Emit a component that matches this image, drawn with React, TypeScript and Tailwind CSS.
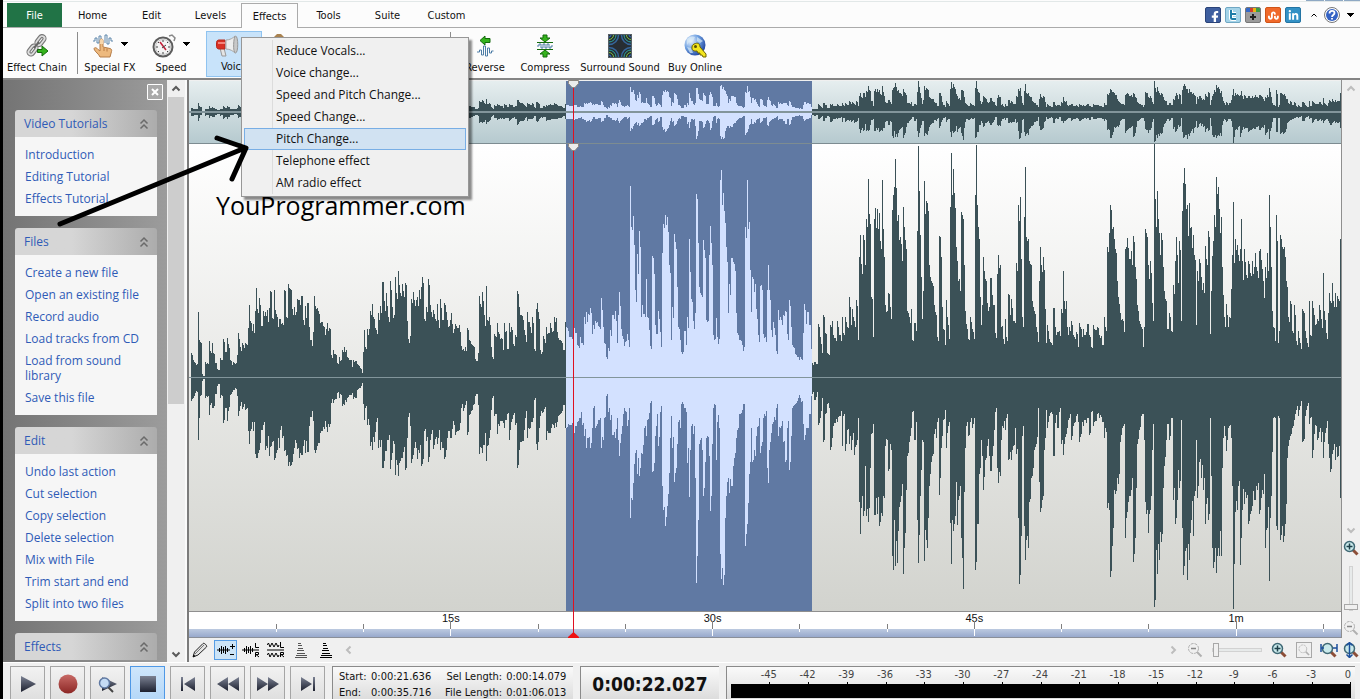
import type { ReactNode } from "react";
import { FaFacebookF, FaLinkedinIn, FaStumbleupon } from "react-icons/fa";

const DURATION = 66.013;
const SELECTION = { start: 21.636, end: 35.716 };
const CURSOR = 22.027;

const WAVE_WIDTH = 1152;

// "x up down" for each peak, in wave pixels
const PEAK_DATA = `
2 24 23,4 17 20,6 14 15,9 65 62,10 37 40,11 35 18,13 3 3,14 1 1,16 15 20,20 36 37,21 26 27,23 34 30,24 24 30,26 14 16,28 8 8,29 7 6,
31 19 20,34 38 45,36 25 30,38 39 43,39 33 33,41 17 17,43 12 14,44 15 12,48 22 18,49 44 38,51 30 28,53 34 31,56 34 32,59 49 53,60 72 66,
61 56 53,64 53 53,66 66 76,67 89 80,68 68 80,70 79 72,72 51 52,74 66 47,76 65 72,78 67 70,80 69 78,81 86 69,83 59 64,85 87 82,86 67 80,
88 60 72,91 58 52,93 54 60,95 87 73,97 60 78,99 93 88,101 88 88,103 68 84,105 70 70,108 78 71,110 77 80,112 81 77,114 57 68,116 71 75,
118 74 74,120 50 48,121 37 39,124 45 43,125 81 72,126 71 75,128 69 68,130 63 65,132 55 53,135 50 51,138 54 54,141 48 46,142 22 25,
144 27 25,148 14 15,150 20 20,153 27 28,155 30 27,158 20 20,161 17 17,163 10 15,164 17 21,168 13 12,171 9 10,173 4 5,174 25 26,
175 47 42,176 30 30,178 48 47,181 66 68,183 73 72,185 58 64,187 47 44,189 64 70,191 71 69,193 95 90,195 76 83,197 84 73,199 60 62,
201 96 91,203 70 75,206 100 97,208 78 87,209 106 98,211 84 83,213 93 80,216 94 92,218 56 60,219 38 39,221 41 48,222 78 85,224 85 77,
228 80 81,230 87 75,232 90 88,233 100 86,235 58 53,237 70 63,239 98 84,241 72 62,244 67 71,248 73 66,249 57 60,251 78 72,253 57 70,
255 74 81,258 57 60,262 64 60,263 53 51,266 53 57,270 52 52,272 31 30,274 28 33,276 30 27,278 49 57,280 37 37,284 31 27,286 18 18,
289 24 27,290 81 76,292 70 70,293 85 75,295 62 67,297 91 83,298 57 68,300 60 60,302 30 32,303 20 20,305 43 38,308 54 56,310 43 48,
314 27 45,315 54 50,318 28 36,320 54 62,322 50 44,324 33 37,326 42 47,328 86 90,330 70 72,332 62 64,334 57 63,336 42 40,338 65 60,
341 50 50,343 60 44,345 28 22,347 68 66,348 74 72,350 58 50,351 27 38,354 41 34,357 50 62,361 54 55,365 60 50,368 45 44,371 37 36,
374 27 27,376 55 50,377 50 50,380 40 47,384 57 65,386 44 48,388 32 44,391 40 40,393 34 47,395 60 58,397 65 70,399 63 60,401 69 70,
403 43 50,404 52 30,406 56 50,408 55 46,410 50 42,412 79 70,414 50 62,415 34 40,417 20 18,419 29 34,421 47 42,423 62 57,426 66 60,
428 34 40,429 62 62,430 85 78,432 48 56,434 38 36,438 43 48,440 30 30,441 191 140,442 150 120,443 147 122,444 161 105,446 87 75,
447 75 72,448 123 96,450 146 98,451 130 90,452 60 75,453 72 76,455 63 50,457 98 58,458 60 42,460 47 35,461 31 25,463 121 94,
465 103 85,466 52 58,468 43 36,469 66 68,471 45 34,472 30 28,473 124 108,474 153 132,476 162 148,478 160 128,480 112 95,481 104 60,
482 37 38,483 70 70,485 143 104,486 135 95,488 90 66,489 50 44,491 37 50,492 25 26,495 46 30,497 32 34,498 60 85,500 138 119,
501 105 72,502 78 48,504 56 56,506 64 100,507 183 205,508 178 178,509 134 142,510 90 66,513 80 72,514 137 118,516 119 84,517 57 60,
520 122 78,521 151 133,523 112 66,524 42 30,527 59 82,528 40 44,530 38 50,531 197 176,532 207 201,533 172 190,534 184 207,535 166 197,
536 154 140,537 130 118,539 64 100,540 93 115,542 119 108,544 115 88,545 113 80,547 64 60,548 44 52,550 37 36,553 32 32,555 30 26,
556 150 168,558 197 146,559 148 125,560 155 96,561 107 84,562 65 50,563 100 84,566 93 78,567 68 58,569 42 48,571 91 75,572 92 68,
574 43 40,576 40 38,578 87 90,579 112 105,580 87 72,582 47 55,584 55 44,586 42 42,587 26 30,589 67 58,591 60 50,594 62 64,596 66 84,
598 43 50,600 77 92,602 50 58,603 32 30,606 23 26,609 20 20,612 18 24,614 44 46,615 73 62,617 53 50,618 65 50,620 52 36,622 28 18,
623 14 16,625 15 22,628 13 14,629 53 47,631 40 40,633 24 20,634 62 64,636 44 36,638 24 26,640 22 30,641 52 72,643 56 60,644 42 48,
648 56 44,650 42 38,653 60 68,654 44 38,656 60 73,658 50 52,660 80 66,662 52 72,663 68 62,665 56 77,667 77 67,669 37 40,670 120 124,
671 142 156,672 113 130,674 142 138,676 112 88,677 158 138,679 198 144,680 163 130,681 153 90,682 80 56,684 40 46,685 158 137,
686 169 137,688 168 136,690 164 148,691 136 144,693 197 138,694 148 118,695 120 120,696 72 68,698 66 62,699 84 93,701 70 66,702 58 72,
703 167 178,704 182 192,705 190 142,706 218 188,708 156 185,709 162 153,711 140 124,713 116 106,714 170 196,715 150 170,717 128 112,
718 66 78,720 60 64,722 68 50,723 37 34,725 54 62,727 46 44,728 146 142,729 231 185,730 186 157,731 142 118,732 100 92,733 58 62,
734 86 64,735 196 183,737 176 162,738 174 170,739 166 140,740 112 108,742 96 84,743 94 78,745 72 56,747 62 60,748 40 44,750 141 117,
751 140 100,752 120 70,753 70 58,754 48 42,756 32 32,757 77 70,758 60 55,760 38 44,761 170 145,762 224 186,763 182 142,764 208 153,
765 184 146,766 169 138,767 130 104,768 116 147,770 98 118,771 86 108,772 165 160,773 162 180,774 158 211,775 112 114,776 66 70,
777 53 48,779 38 58,781 60 44,783 48 50,785 38 40,786 182 192,787 232 184,788 172 146,789 150 146,790 138 96,791 80 90,792 52 62,
793 72 78,794 120 112,796 98 82,798 74 68,800 70 78,801 99 93,803 82 78,805 72 52,806 44 34,808 103 90,809 122 105,811 112 98,
812 50 62,813 51 48,814 38 50,816 58 52,817 40 40,819 83 82,821 62 74,822 78 82,824 56 68,826 54 50,827 114 76,829 172 140,
830 156 206,831 180 197,832 118 158,833 60 58,835 160 148,836 210 182,837 140 162,839 138 170,840 116 124,842 112 100,843 76 98,
845 66 72,847 50 66,849 35 30,850 96 104,851 130 134,852 112 130,854 120 118,855 107 72,856 68 60,857 34 32,858 52 50,860 38 38,
863 32 36,864 69 78,866 50 45,868 45 50,870 46 34,872 68 66,874 106 77,875 76 66,877 76 56,878 50 50,880 50 40,882 56 62,884 42 48,
887 45 38,889 30 44,890 54 64,893 40 44,894 48 48,898 53 40,900 42 57,902 30 34,904 52 48,908 50 36,910 42 40,913 32 44,915 60 60,
917 46 54,918 130 130,920 144 132,921 172 199,923 148 168,924 150 150,925 138 112,926 128 116,928 96 100,929 80 106,931 64 64,
933 58 50,935 45 46,936 128 160,937 130 140,938 139 134,940 118 118,942 126 112,944 141 184,946 110 160,947 98 110,948 72 66,
950 56 52,952 50 38,954 30 36,955 50 62,956 148 124,957 144 136,959 112 155,961 116 132,963 74 72,964 56 46,965 233 229,966 178 222,
967 150 172,968 186 196,969 158 166,970 144 182,972 144 164,974 110 110,975 86 88,977 76 62,978 48 46,980 64 62,982 46 40,984 92 122,
986 116 146,987 140 140,989 94 92,990 136 110,992 56 42,993 166 150,994 194 197,995 209 188,997 168 170,998 172 202,1000 174 182,
1002 150 142,1004 142 158,1005 122 118,1007 52 62,1008 106 120,1010 118 84,1012 100 100,1014 94 112,1016 131 146,1017 118 126,
1019 146 142,1020 140 136,1021 43 40,1022 86 98,1023 121 170,1024 136 190,1025 162 184,1027 200 195,1029 190 170,1030 168 178,
1032 160 178,1033 110 90,1034 82 60,1035 60 48,1036 50 58,1037 73 73,1039 50 50,1040 60 48,1042 88 60,1043 122 108,1044 175 231,
1045 114 186,1046 138 134,1048 132 132,1049 122 108,1051 128 187,1052 158 160,1053 116 132,1055 128 126,1057 102 120,1059 116 146,
1061 104 136,1063 116 128,1066 124 122,1068 106 112,1070 126 136,1071 128 132,1073 108 112,1074 96 116,1076 110 170,1078 124 150,
1080 182 203,1081 150 140,1082 110 118,1083 66 74,1084 50 40,1086 36 40,1087 162 148,1088 136 152,1089 34 38,1090 46 40,1091 142 162,
1093 130 148,1094 128 164,1095 130 158,1097 96 126,1098 90 80,1099 60 68,1101 76 58,1103 46 50,1105 72 42,1107 36 32,1109 46 38,
1111 34 28,1113 68 64,1116 46 38,1118 34 28,1120 76 46,1121 42 40,1123 76 80,1125 62 56,1128 58 62,1130 72 54,1132 58 64,1134 104 80,
1135 66 64,1137 44 50,1139 64 66,1140 84 80,1141 76 94,1143 94 76,1144 76 72,1146 84 82,1149 78 78,1150 76 68,1151 138 120`;

type Column = { x: number; up: number; down: number };

// Fill in every column between two peaks, with a little variation so it does not look flat
const buildColumns = (): Column[] => {
  const peaks = PEAK_DATA.trim().split(",").map((p) => p.trim().split(" ").map(Number));
  const columns: Column[] = [];
  peaks.forEach(([x, up, down], i) => {
    const next = i + 1 < peaks.length ? peaks[i + 1][0] : x + 1;
    for (let c = x; c < next; c++) {
      const rnd = Math.abs(Math.sin(c * 12.9898) * 43758.5453) % 1;
      const k = c === x ? 1 : 0.82 + rnd * 0.18;
      columns.push({ x: c, up: up * k, down: down * k });
    }
  });
  return columns;
};

const COLUMNS = buildColumns();
const SEL_X1 = Math.floor((SELECTION.start / DURATION) * WAVE_WIDTH);
const SEL_X2 = Math.floor((SELECTION.end / DURATION) * WAVE_WIDTH);
const CURSOR_X = Math.floor((CURSOR / DURATION) * WAVE_WIDTH);

const wavePath = (columns: Column[], middle: number, scale: number) =>
  columns
    .map(({ x, up, down }) => `M${x} ${Math.round(middle - up * scale)}h1V${Math.round(middle + 1 + down * scale)}h-1z`)
    .join("");

const percent = (seconds: number) => `${(seconds / DURATION) * 100}%`;

function Waveform({ height, scale }: { height: number; scale: number }) {
  const middle = Math.floor(height / 2);
  const inside = COLUMNS.filter((c) => c.x >= SEL_X1 && c.x < SEL_X2);
  const outside = COLUMNS.filter((c) => c.x < SEL_X1 || c.x >= SEL_X2);

  return (
    <svg
      className="absolute inset-0 h-full w-full"
      viewBox={`0 0 ${WAVE_WIDTH} ${height}`}
      preserveAspectRatio="none"
      shapeRendering="crispEdges"
    >
      <rect x={SEL_X1} y={0} width={SEL_X2 - SEL_X1} height={height} fill="#6079a3" />
      <path d={wavePath(outside, middle, scale)} fill="#3b5157" />
      <path d={wavePath(inside, middle, scale)} fill="#d3e1ff" />
      <rect x={0} y={middle} width={WAVE_WIDTH} height={1} fill="#82959b" />
      <rect x={CURSOR_X} y={0} width={1} height={height} fill="#e01020" />
    </svg>
  );
}

/* ---------- small drawings ---------- */

const Caret = () => (
  <svg width="7" height="4" viewBox="0 0 7 4" shapeRendering="crispEdges"><path d="M0 0h7L3.5 4z" fill="#000" /></svg>
);

type Dir = "up" | "down" | "left" | "right";
const CHEVRONS: Record<Dir, string> = {
  up: "M1.5 6.5 5 3l3.5 3.5",
  down: "M1.5 3.5 5 7l3.5-3.5",
  left: "M6.5 1.5 3 5l3.5 3.5",
  right: "M3.5 1.5 7 5 3.5 8.5",
};

function Chevron({ dir, color = "#5a5a5a" }: { dir: Dir; color?: string }) {
  return (
    <svg width="10" height="10" viewBox="0 0 10 10">
      <path d={CHEVRONS[dir]} fill="none" stroke={color} strokeWidth="2" />
    </svg>
  );
}

const ChainIcon = () => (
  <svg width="24" height="24" viewBox="0 0 24 24" fill="none">
    <g stroke="#777" strokeWidth="4">
      <rect x="13" y="1.5" width="5" height="10" rx="2.5" transform="rotate(38 15.500 6.500)" />
      <rect x="5" y="11" width="5" height="10" rx="2.5" transform="rotate(38 7.500 16)" />
    </g>
    <g stroke="#dedede" strokeWidth="1.8">
      <rect x="13" y="1.5" width="5" height="10" rx="2.5" transform="rotate(38 15.500 6.500)" />
      <rect x="5" y="11" width="5" height="10" rx="2.5" transform="rotate(38 7.500 16)" />
    </g>
    <path d="m9 14 5-6" stroke="#666" strokeWidth="2" />
    <path d="M12.5 15.5H17V12l6 5-6 5v-3.500h-4.500z" fill="#35b31c" stroke="#146a0c" />
  </svg>
);

const FingerIcon = () => (
  <svg width="22" height="24" viewBox="0 0 22 24" fill="none">
    <path d="M1 7h2V4h2v5h2V2h2v8m4-1V1h2v9h2V4h2v3h2" stroke="#5d86ab" />
    <path d="M8 6.500c0-2 3-2 3 0V13l7 1.500c1.500.5 2 1.500 1.500 3L18 23H8c-1-3-5-5-6-8 0-1.500 2-2 3.500 0L8 17z" fill="#edb97e" stroke="#b57c48" />
    <path d="M8 6.500c0-2 3-2 3 0V10H8z" fill="#f7d6ab" />
    <path d="M12 14v3m3-2.500v3" stroke="#b87a42" />
  </svg>
);

const StopwatchIcon = () => (
  <svg width="24" height="24" viewBox="0 0 24 24" fill="none">
    <path d="m17 2 3-1 3 3-1 3" stroke="#888" strokeWidth="1.5" />
    <circle cx="11" cy="13" r="9.500" fill="#f4f4f4" stroke="#5c5c5c" strokeWidth="2" />
    <circle cx="11" cy="13" r="7.500" stroke="#c6c6c6" />
    <path d="M11 6v2m0 10v2m-7-7h2m10 0h2M6 8l1 1m8 8 1 1m0-10-1 1m-8 8-1 1" stroke="#444" />
    <path d="m8 8 6 8" stroke="#c4213a" strokeWidth="1.5" />
    <path d="m10 14 4-3" stroke="#444" />
  </svg>
);

const MegaphoneIcon = () => (
  <svg width="24" height="24" viewBox="0 0 24 24">
    <path d="m5 13 2 8h4l-2-8z" fill="#e4e4e4" stroke="#999" />
    <path d="M1.500 7.500C1.500 6 2.500 5 4 5h6v9H4c-1.500 0-2.500-1-2.500-2.500z" fill="#d93025" stroke="#b5281c" />
    <path d="M3 7h7v2H3z" fill="#f4837a" />
    <path d="M11 5c4 0 7-2 9-4v17c-2-2-5-4-9-4z" fill="#ededed" stroke="#a8a8a8" />
    <path d="M20.500 1c3 0 3 17 0 17s-2-17 0-17z" fill="#c8c8c8" stroke="#979797" />
  </svg>
);

const ReverseIcon = () => (
  <svg width="20" height="24" viewBox="0 0 20 24" fill="none">
    <path d="M5 6.500 10 2v2.500h5v4h-5V11z" fill="#35b31c" stroke="#146a0c" />
    <path d="M2 18h2.500v-2h2v5h2v-9h2v10h2v-8h2v5h2v-2h2" stroke="#4d7da6" />
  </svg>
);

const CompressIcon = () => (
  <svg width="18" height="24" viewBox="0 0 18 24" fill="none">
    <path d="M7 1h4v3h3L9 8 4 4h3zM7 23h4v-3h3l-5-4-5 4h3z" fill="#35b31c" stroke="#146a0c" />
    <path d="M1 8.500h16m-16 7h16" stroke="#146a0c" />
    <path d="M1 12h2v-2h2v4h2v-4h2v4h2v-4h2v4h2v-2h2" stroke="#4d7da6" />
  </svg>
);

const SurroundIcon = () => (
  <svg width="24" height="24" viewBox="0 0 24 24" fill="none">
    <rect width="24" height="24" fill="#272d33" />
    {[0, 90, 180, 270].map((angle) => (
      <g key={angle} transform={`rotate(${angle} 12 12)`}>
        <path d="M10.500 1A9.500 9.500 0 0 1 1 10.500" stroke="#35669c" strokeWidth="1.500" />
        <path d="M8 1a7 7 0 0 1-7 7" stroke="#2ca5a0" />
        <path d="M5.500 1A4.500 4.500 0 0 1 1 5.500" stroke="#7cc242" />
        <path d="M3 1a2 2 0 0 1-2 2" stroke="#2f73c9" />
      </g>
    ))}
    <rect x=".5" y=".5" width="23" height="23" stroke="#555f66" />
  </svg>
);

const GlobeKeyIcon = () => (
  <svg width="24" height="24" viewBox="0 0 24 24">
    <defs>
      <radialGradient id="globe" cx=".3" cy=".3" r=".8">
        <stop offset="0" stopColor="#eef6ff" />
        <stop offset=".5" stopColor="#6d9fe0" />
        <stop offset="1" stopColor="#1c3f9b" />
      </radialGradient>
    </defs>
    <circle cx="12" cy="11" r="10.500" fill="url(#globe)" />
    <path d="M4 5c3-3 6-3 8-2l-2 4-4 1-2 3zM14 3l6 4-3 2-3-2zM4 13l4 1 2 5-3 0z" fill="#d7e9f7" opacity=".7" />
    <path d="M12.500 9.500c2.500-1 4.500.5 4.500 3.500l6 7v3h-3l-1-2h-2v-2h-2l-1-2c-3.500.5-5.500-1-5-4 0-2 1.500-3 3.500-3.500z" fill="#f3e51d" stroke="#6d6300" />
    <circle cx="12.500" cy="12.500" r="1.500" fill="#5a5200" />
  </svg>
);

function Magnifier({ sign, off = false, arrows }: { sign?: "+" | "-"; off?: boolean; arrows?: "h" | "v" }) {
  const rim = off ? "#b0b0b0" : "#3f6874";
  return (
    <svg width="18" height="16" viewBox="0 0 18 16" fill="none">
      <path d="m10.500 9.500 5 5" stroke={off ? "#b0b0b0" : "#8c4e38"} strokeWidth={off ? "2" : "3"} />
      <circle cx="7.500" cy="6.500" r="5" fill={off ? "#f0f0f0" : "#c9e9eb"} stroke={rim} strokeWidth={off ? "1" : "1.5"} strokeDasharray={off ? "3 1" : undefined} />
      {sign && <path d={sign === "+" ? "M4.500 6.500h6m-3-3v6" : "M5 6.500h5"} stroke={off ? "#888" : "#1d3f49"} strokeWidth="1.500" />}
      {arrows === "h" && <path d="M1 2v8m16-8v8M1 6h3m13 0h-4" stroke="#1b4f9c" strokeWidth="1.500" />}
      {arrows === "v" && <path d="M7.500 0v16M4.500 3.500l3-3 3 3M4.500 12.500l3 3 3-3" stroke="#1b4f9c" strokeWidth="1.500" />}
    </svg>
  );
}

const PencilIcon = () => (
  <svg width="18" height="18" viewBox="0 0 18 18">
    <path d="m2 16 1.500-5L12 2.500c1-1 4.500 2 3.500 3.500L7 14z" fill="#e3e3e3" stroke="#222" />
    <path d="m4 13 9-9" stroke="#777" />
    <path d="m2 16 .5-2.500L4.500 15z" fill="#000" />
  </svg>
);

const WavePlusIcon = () => (
  <svg width="18" height="16" viewBox="0 0 18 16" fill="none" stroke="#000">
    <path d="M0 8h13M2.500 6v4m2-6v8m2-7v6m2-7v8m2-6v4M15.500 2v5M13 4.500h5M13 12.500h4" />
  </svg>
);
const WaveLRIcon = () => (
  <svg width="18" height="16" viewBox="0 0 18 16" fill="none" stroke="#000">
    <path d="M0 8h17M2.500 6v4m2-6v8m2-7v6m2-7v8m2-6v4M13.500 1v4.500H17M13.500 15v-4.500h3v2h-2.500l3 2.500" />
  </svg>
);
const SplitIcon = () => (
  <svg width="18" height="16" viewBox="0 0 18 16" fill="none" stroke="#000">
    <path d="m0 3 1.500-2L3 5l2-4 2 4 2-4 2 4 1-2M0 13l1.500-2L3 15l2-4 2 4 2-4 2 4 1-2M0 8h17M13.500 0v5.500H17M13.500 15v-4.500h3v2h-2.500l3 2.500" />
  </svg>
);
const StairsIcon = ({ color }: { color: string }) => (
  <svg width="14" height="16" viewBox="0 0 14 16" shapeRendering="crispEdges">
    <path d="M4 1h3v1H4zM4 3h4v1H4zM4 6h5v1H4zM3 8h7v1H3zM3 11h8v1H3zM2 13h11v1H2zM1 15h12v1H1z" fill={color} />
  </svg>
);

/* ---------- ribbon ---------- */

const TABS = ["Home", "Edit", "Levels", "Effects", "Tools", "Suite", "Custom"];

function TabBar() {
  return (
    <nav className="relative flex h-7 shrink-0 items-end border-b border-[#ababab] bg-[#fcfcfc] pl-1">
      <div className="absolute inset-x-0 top-0 flex h-[2px] justify-end gap-px border-b border-[#e2e8e8]">
        <span className="w-[18px] bg-[#8fa9c4]" />
        <span className="w-[18px] bg-[#8fa9c4]" />
        <span className="w-4 bg-[#8fa9c4]" />
      </div>
      <button className="mr-px h-6 w-[55px] bg-[#217346] pt-[2px] text-white">File</button>
      {TABS.map((tab) => (
        <button
          key={tab}
          className={`mx-px w-[57px] pt-[3px] ${tab === "Effects" ? "-mb-px h-[25px] border border-b-0 border-[#ababab] bg-[#fcfcfc]" : "h-6"}`}
        >
          {tab}
        </button>
      ))}
      <div className="ml-auto flex h-6 items-center gap-1 pr-[6px]">
        <SocialButton label="Facebook" className="border-[#2a4378] bg-[#3f5f9f]"><FaFacebookF size={12} className="mt-1 ml-1" /></SocialButton>
        <SocialButton label="Twitter" className="border-[#6fa7c3] bg-[#a4d3e8]">
          <svg width="12" height="12" viewBox="0 0 12 12"><path d="M4 1v7.500c0 1 .8 1.500 1.500 1.500H9M4 5h5" fill="none" stroke="#fff" strokeWidth="4" /><path d="M4 1v7.500c0 1 .8 1.500 1.500 1.500H9M4 5h5" fill="none" stroke="#1f7da8" strokeWidth="2" /></svg>
        </SocialButton>
        <SocialButton label="Google" className="border-[#777] bg-[#9b9b9b]">
          <svg width="14" height="14" viewBox="0 0 14 14">
            <path d="M0 0h4v4H0z" fill="#3469c9" />
            <path d="M4 0h3v4H4z" fill="#d33f2c" />
            <path d="M7 0h3v4H7z" fill="#e9b412" />
            <path d="M10 0h4v4h-4z" fill="#3c9b43" />
            <path d="M7 6v6M4 9h6" stroke="#222" strokeWidth="2" />
          </svg>
        </SocialButton>
        <SocialButton label="StumbleUpon" className="border-[#cf5418] bg-[#f0692a]"><FaStumbleupon size={11} /></SocialButton>
        <SocialButton label="LinkedIn" className="border-[#2374a3] bg-[#3391c5]"><FaLinkedinIn size={11} /></SocialButton>
        <button aria-label="Collapse ribbon" className="mr-[3px] ml-[6px]">
          <svg width="6" height="4" viewBox="0 0 6 4"><path d="M.5 3.500 3 1l2.500 2.500" fill="none" stroke="#000" /></svg>
        </button>
        <button aria-label="Help" className="mr-[3px]">
          <svg width="16" height="16" viewBox="0 0 16 16" fill="none">
            <circle cx="8" cy="8" r="7.500" fill="#fff" stroke="#777" />
            <circle cx="8" cy="8" r="6" fill="#3563c4" />
            <path d="M5.500 6.500C5.500 3 10.500 3 10.500 6c0 2-2.500 2-2.500 4M8 11v1.500" stroke="#fff" strokeWidth="1.800" />
          </svg>
        </button>
        <button aria-label="More"><Caret /></button>
      </div>
    </nav>
  );
}

function SocialButton({ label, className, children }: { label: string; className: string; children: ReactNode }) {
  return (
    <button aria-label={label} className={`flex h-4 w-4 items-center justify-center overflow-hidden rounded-[2px] border text-white ${className}`}>
      {children}
    </button>
  );
}

function ToolButton({ icon, label, className, caret = false }: { icon: ReactNode; label: string; className: string; caret?: boolean }) {
  return (
    <button className={`flex h-[46px] flex-col items-center justify-between whitespace-nowrap pt-[3px] pb-px ${className}`}>
      <span className="flex items-center gap-[7px]">
        {icon}
        {caret && <span className="mb-1"><Caret /></span>}
      </span>
      <span className="leading-4">{label}</span>
    </button>
  );
}

function Toolbar() {
  return (
    <div className="flex h-[52px] shrink-0 items-start border-b-2 border-[#858585] bg-[#fcfcfc] pt-[3px]">
      <ToolButton icon={<ChainIcon />} label="Effect Chain" className="w-[68px]" />
      <div className="mt-px mr-px ml-[6px] h-[42px] w-px bg-[#8c8c8c]" />
      <ToolButton icon={<FingerIcon />} label="Special FX" className="w-[62px]" caret />
      <ToolButton icon={<StopwatchIcon />} label="Speed" className="w-[60px]" caret />
      <ToolButton icon={<MegaphoneIcon />} label="Voice" className="ml-[5px] w-14 border border-[#8fc3f0] bg-[#c8e3fa] pt-[2px]" caret />
      <div className="flex w-[189px] items-start justify-between pl-3">
        <svg width="10" height="10" viewBox="0 0 10 10"><path d="M0 8V6l3-3h4l3 3v2z" fill="#a9824f" /></svg>
        <div className="mt-px h-[42px] w-px bg-[#8c8c8c]" />
      </div>
      <ToolButton icon={<ReverseIcon />} label="Reverse" className="ml-1 w-[60px]" />
      <ToolButton icon={<CompressIcon />} label="Compress" className="w-[60px]" />
      <ToolButton icon={<SurroundIcon />} label="Surround Sound" className="w-[90px]" />
      <ToolButton icon={<GlobeKeyIcon />} label="Buy Online" className="w-[60px]" />
    </div>
  );
}

const MENU_ITEMS = [
  "Reduce Vocals...",
  "Voice change...",
  "Speed and Pitch Change...",
  "Speed Change...",
  "Pitch Change...",
  "Telephone effect",
  "AM radio effect",
];

function VoiceMenu() {
  return (
    <ul className="absolute top-[37px] left-[238px] w-[228px] border border-[#979797] bg-[#f0f0f0] p-[2px] font-['Open_Sans','Noto_Sans',sans-serif] text-[12px] shadow-[3px_3px_2px_rgba(0,0,0,0.45)]">
      <li aria-hidden className="absolute inset-y-[2px] left-[30px] w-px bg-[#dcdcdc]" />
      {MENU_ITEMS.map((item) => (
        <li key={item} className="relative">
          <button
            className={`h-[22px] w-full border pl-[31px] text-left leading-5 ${item === "Pitch Change..." ? "border-[#78aee5] bg-[#d1e2f2]" : "border-transparent"}`}
          >
            {item}
          </button>
        </li>
      ))}
    </ul>
  );
}

/* ---------- sidebar ---------- */

const PANELS = [
  { title: "Video Tutorials", links: ["Introduction", "Editing Tutorial", "Effects Tutorial"] },
  {
    title: "Files",
    links: ["Create a new file", "Open an existing file", "Record audio", "Load tracks from CD", "Load from sound library", "Save this file"],
  },
  {
    title: "Edit",
    links: ["Undo last action", "Cut selection", "Copy selection", "Delete selection", "Mix with File", "Trim start and end", "Split into two files"],
  },
  { title: "Effects", links: [] },
];

function Sidebar() {
  return (
    <aside className="flex w-[184px] shrink-0 overflow-hidden border-r-2 border-[#fafafa] font-['Open_Sans','Noto_Sans',sans-serif] text-[12px] text-[#2f5bb7]">
      <div className="flex w-[164px] flex-col bg-linear-to-r from-[#747474] to-[#9c9c9c] pr-[10px] pl-3">
        <div className="flex h-[30px] shrink-0 justify-end pt-1">
          <button aria-label="Close" className="-mr-[6px] flex h-4 w-4 items-center justify-center rounded-[1px] border border-white bg-[#a9a9a9]">
            <svg width="8" height="8" viewBox="0 0 8 8"><path d="m1 1 6 6m0-6L1 7" stroke="#fff" strokeWidth="2" /></svg>
          </button>
        </div>
        <div className="flex flex-col gap-3">
          {PANELS.map((panel) => (
            <section key={panel.title}>
              <h2 className="flex h-[27px] items-center justify-between rounded-t-[3px] bg-linear-to-r from-[#d6d6d6] from-40% to-[#acacac] pr-2 pl-[9px]">
                {panel.title}
                <button aria-label={`Collapse ${panel.title}`}>
                  <svg width="10" height="12" viewBox="0 0 10 12" fill="none" stroke="#6a6a6a" strokeWidth="1.500">
                    <path d="m1.500 5.500 3.500-3.500 3.500 3.500M1.500 10.500 5 7l3.500 3.500" />
                  </svg>
                </button>
              </h2>
              {panel.links.length > 0 && (
                <ul className="flex flex-col gap-[7px] bg-[#f6f6f6] p-[10px] leading-[15px]">
                  {panel.links.map((link) => (
                    <li key={link}><a href="#">{link}</a></li>
                  ))}
                </ul>
              )}
            </section>
          ))}
        </div>
      </div>
      <div className="flex w-[18px] flex-col items-center bg-[#f0f0f0]">
        <button aria-label="Scroll up" className="flex h-[17px] items-center"><Chevron dir="up" /></button>
        <div className="flex w-4 flex-1 flex-col"><div className="h-[56%] bg-[#cdcdcd]" /></div>
        <button aria-label="Scroll down" className="flex h-[17px] items-center"><Chevron dir="down" /></button>
      </div>
    </aside>
  );
}

/* ---------- editor ---------- */

const TICKS = Array.from({ length: 13 }, (_, i) => (i + 1) * 5);
const TICK_LABELS: Record<number, string> = { 15: "15s", 30: "30s", 45: "45s", 60: "1m" };

function Ruler() {
  return (
    <div className="relative h-[27px] shrink-0 border-t border-[#8f8f8f] bg-white font-['Liberation_Sans',sans-serif] text-[11px]">
      <div className="absolute inset-x-0 bottom-0 h-[9px] border-b border-[#8a8f99] bg-linear-to-b from-[#bccae0] to-[#98a9cc]" />
      {TICKS.map((t) => (
        <div key={t} className="absolute inset-y-0 flex w-10 -translate-x-1/2 flex-col items-center justify-start" style={{ left: percent(t) }}>
          {TICK_LABELS[t] ? (
            <>
              <span className="h-[9px] leading-[13px]">{TICK_LABELS[t]}</span>
              <span className="h-2 w-px bg-[#808080]" />
              <span className="h-[7px] w-px bg-white" />
            </>
          ) : (
            <>
              <span className="mt-3 h-[5px] w-px bg-[#808080]" />
              <span className="h-[3px] w-px bg-white" />
            </>
          )}
        </div>
      ))}
    </div>
  );
}

const CursorHandle = ({ className }: { className: string }) => (
  <svg className={`absolute -left-[5px] ${className}`} width="11" height="8" viewBox="0 0 11 8">
    <path d="M.5.5h10v3l-3.500 4h-3L.5 3.500z" fill="#ececec" stroke="#8d8680" />
  </svg>
);

function Editor() {
  return (
    <div className="relative flex min-w-0 flex-1 flex-col">
      <div className="relative mt-px h-[62px] shrink-0 bg-linear-to-b from-[#e6eeef] to-[#b6cacf]">
        <Waveform height={61} scale={0.128} />
      </div>
      <div className="relative flex-1 border-t border-[#7d8c91] bg-linear-to-b from-white to-[#d2d3ce]">
        <Waveform height={467} scale={1} />
      </div>
      <Ruler />
      <div className="absolute inset-y-0 w-px" style={{ left: `${(CURSOR_X / WAVE_WIDTH) * 100}%` }}>
        <div className="absolute bottom-0 h-[27px] w-px bg-[#e01020]" />
        <CursorHandle className="top-0" />
        <CursorHandle className="top-[63px]" />
        <svg className="absolute bottom-0 -left-[5px]" width="11" height="6" viewBox="0 0 11 6"><path d="M5.500 0 11 5v1H0V5z" fill="#ee1010" /></svg>
      </div>
    </div>
  );
}

function VerticalZoom() {
  return (
    <div className="flex w-[19px] shrink-0 flex-col items-center border-l border-[#8f8f8f] bg-[#f0f0f0]">
      <button aria-label="Scroll up" className="flex h-[18px] items-center"><Chevron dir="up" color="#bdbdbd" /></button>
      <div className="flex-1" />
      <button aria-label="Scroll down" className="flex h-[17px] items-center"><Chevron dir="down" color="#bdbdbd" /></button>
      <button aria-label="Zoom in vertically" className="flex h-5 items-center"><Magnifier sign="+" /></button>
      <input
        type="range"
        aria-label="Vertical zoom"
        defaultValue={0}
        className="mt-2 h-[45px] w-[14px] appearance-none bg-transparent [direction:rtl] [writing-mode:vertical-lr] [&::-webkit-slider-runnable-track]:mx-auto [&::-webkit-slider-runnable-track]:w-1 [&::-webkit-slider-runnable-track]:border [&::-webkit-slider-runnable-track]:border-[#d2d2d2] [&::-webkit-slider-runnable-track]:bg-[#e7eaea] [&::-webkit-slider-thumb]:-ml-[6px] [&::-webkit-slider-thumb]:h-[6px] [&::-webkit-slider-thumb]:w-[14px] [&::-webkit-slider-thumb]:appearance-none [&::-webkit-slider-thumb]:border [&::-webkit-slider-thumb]:border-[#a8a8a8] [&::-webkit-slider-thumb]:bg-[#f0f0f0]"
      />
      <button aria-label="Zoom out vertically" className="mt-[7px] flex h-5 items-center"><Magnifier sign="-" off /></button>
    </div>
  );
}

function ViewBar() {
  return (
    <div className="flex h-6 shrink-0 items-center bg-[#f0f0f0]">
      <div className="flex items-center gap-[7px] pl-[2px]">
        <button aria-label="Draw"><PencilIcon /></button>
        <button aria-label="Wave view" className="-mx-[2px] flex h-5 w-[23px] items-center justify-center border border-[#569de5] bg-[#cce4f7]"><WavePlusIcon /></button>
        <button aria-label="Left and right view"><WaveLRIcon /></button>
        <button aria-label="Split view"><SplitIcon /></button>
        <button aria-label="Spectrum view" className="ml-[2px]"><StairsIcon color="#555" /></button>
        <button aria-label="Frequency view" className="ml-1"><StairsIcon color="#000" /></button>
        <button aria-label="Scroll left" className="ml-1"><Chevron dir="left" color="#bdbdbd" /></button>
      </div>
      <div className="ml-auto flex items-center">
        <button aria-label="Scroll right" className="mr-2"><Chevron dir="right" color="#bdbdbd" /></button>
        <button aria-label="Zoom out"><Magnifier sign="-" off /></button>
        <input
          type="range"
          aria-label="Zoom"
          defaultValue={0}
          className="mx-2 h-4 w-[50px] appearance-none bg-transparent [&::-webkit-slider-runnable-track]:h-1 [&::-webkit-slider-runnable-track]:border [&::-webkit-slider-runnable-track]:border-[#d2d2d2] [&::-webkit-slider-runnable-track]:bg-[#e7eaea] [&::-webkit-slider-thumb]:-mt-[6px] [&::-webkit-slider-thumb]:h-[14px] [&::-webkit-slider-thumb]:w-[6px] [&::-webkit-slider-thumb]:appearance-none [&::-webkit-slider-thumb]:border [&::-webkit-slider-thumb]:border-[#a8a8a8] [&::-webkit-slider-thumb]:bg-[#f0f0f0]"
        />
        <button aria-label="Zoom in"><Magnifier sign="+" /></button>
        <button aria-label="Zoom to selection" className="mx-2 flex h-4 w-4 items-center justify-center border border-[#a8a8a8]"><Magnifier off /></button>
        <button aria-label="Zoom to full width"><Magnifier arrows="h" /></button>
        <button aria-label="Zoom to full height" className="ml-1"><Magnifier arrows="v" /></button>
      </div>
    </div>
  );
}

/* ---------- transport ---------- */

const TRANSPORT: { label: string; path: string }[] = [
  { label: "Play", path: "M5 4v16l15-8z" },
  { label: "Record", path: "" },
  { label: "Scrub", path: "M6 5v14l15-7z" },
  { label: "Stop", path: "M4 4h16v16H4z" },
  { label: "Go to start", path: "M5 5h2v14H5zM19 5v14L8 12z" },
  { label: "Rewind", path: "M12 5v14L1 12zM23 5v14l-11-7z" },
  { label: "Fast forward", path: "M1 5v14l11-7zM12 5v14l11-7z" },
  { label: "Go to end", path: "M5 5v14l11-7zM17 5h2v14h-2z" },
];

function TransportButton({ label, path }: { label: string; path: string }) {
  const active = label === "Stop";
  return (
    <button
      aria-label={label}
      className={`flex h-9 w-[35px] items-center justify-center border ${active ? "border-[#4e98e6] bg-linear-to-b from-[#cfe6fb] to-[#b3d7f8]" : "border-[#a5a5a5] bg-linear-to-b from-[#f2f2f2] to-[#dedede]"}`}
    >
      <svg width="24" height="24" viewBox="0 0 24 24">
        <defs>
          <linearGradient id="steel" x1="0" y1="0" x2="0" y2="1">
            <stop offset="0" stopColor="#7b8192" />
            <stop offset="1" stopColor="#1d2130" />
          </linearGradient>
          <linearGradient id="rec" x1="0" y1="0" x2="0" y2="1">
            <stop offset="0" stopColor="#c86a66" />
            <stop offset="1" stopColor="#8c2725" />
          </linearGradient>
        </defs>
        {label === "Record" ? <circle cx="12" cy="12" r="9.500" fill="url(#rec)" /> : <path d={path} fill="url(#steel)" />}
        {label === "Scrub" && (
          <>
            <path d="m12 15 5 5" stroke="#444" strokeWidth="2" />
            <circle cx="8.500" cy="11" r="5" fill="#c4dbf5" stroke="#5f79a3" strokeWidth="1.500" />
          </>
        )}
      </svg>
    </button>
  );
}

const METER_STEPS = Array.from({ length: 16 }, (_, i) => -45 + i * 3);

function Transport() {
  const panel = "border-t border-l border-[#8a8a8a] bg-linear-to-b from-[#fafafa] to-[#dadada]";
  return (
    <footer className="flex h-[37px] shrink-0 overflow-hidden border-t border-white bg-[#f0f0f0] pt-[3px] pr-[5px] pl-[7px]">
      <div className="flex shrink-0 gap-[5px]">
        {TRANSPORT.map((t) => <TransportButton key={t.label} {...t} />)}
      </div>
      <div className={`ml-[7px] h-9 w-[241px] shrink-0 pt-[2px] pl-[6px] ${panel}`}>
        <table className="leading-4 whitespace-nowrap">
          <tbody>
            <tr>
              <td className="w-8 p-0">Start:</td>
              <td className="w-[60px] p-0">0:00:21.636</td>
              <td className="w-[75px] p-0 pr-1 text-right">Sel Length:</td>
              <td className="p-0">0:00:14.079</td>
            </tr>
            <tr>
              <td className="p-0">End:</td>
              <td className="p-0">0:00:35.716</td>
              <td className="p-0 pr-1 text-right">File Length:</td>
              <td className="p-0">0:01:06.013</td>
            </tr>
          </tbody>
        </table>
      </div>
      <div className={`ml-[7px] h-9 w-[139px] shrink-0 text-center text-[19px] leading-[35px] font-bold ${panel}`}>0:00:22.027</div>
      <div className={`ml-[7px] h-9 min-w-0 flex-1 px-1 text-[#444] ${panel}`}>
        <div className="relative h-[17px]">
          {METER_STEPS.map((db) => (
            <div
              key={db}
              className={`absolute inset-y-0 flex w-8 flex-col justify-between ${db === 0 ? "-translate-x-full items-end" : "-translate-x-1/2 items-center"}`}
              style={{ left: `${((48 + db) / 48) * 100}%` }}
            >
              <span className={`leading-[15px] ${db === 0 ? "" : "pr-[2px]"}`}>{db}</span>
              <span className="h-[2px] w-px bg-black" />
            </div>
          ))}
        </div>
        <div className="h-[14px] bg-black" />
      </div>
    </footer>
  );
}

export default function App() {
  return (
    <div className="relative flex h-screen flex-col overflow-hidden border-l-[3px] border-black bg-[#f0f0f0] font-['DejaVu_Sans_Condensed','DejaVu_Sans',sans-serif] text-[11px] text-[#111]">
      <TabBar />
      <Toolbar />
      <div className="flex min-h-0 flex-1">
        <Sidebar />
        <main className="flex min-w-0 flex-1 flex-col border-l-2 border-[#7b7b7b]">
          <div className="flex min-h-0 flex-1">
            <Editor />
            <VerticalZoom />
          </div>
          <ViewBar />
        </main>
      </div>
      <Transport />

      <p className="absolute top-[187px] left-[213px] font-['Open_Sans','Noto_Sans',sans-serif] text-[25px] leading-9 text-black">YouProgrammer.com</p>
      <VoiceMenu />
      <svg className="pointer-events-none absolute top-[130px] left-[50px]" width="200" height="100" viewBox="0 0 200 100">
        <path d="M7 94 192 18M164 8l29 10-14 31" fill="none" stroke="#000" strokeWidth="5" strokeLinecap="round" strokeLinejoin="round" />
      </svg>
    </div>
  );
}
